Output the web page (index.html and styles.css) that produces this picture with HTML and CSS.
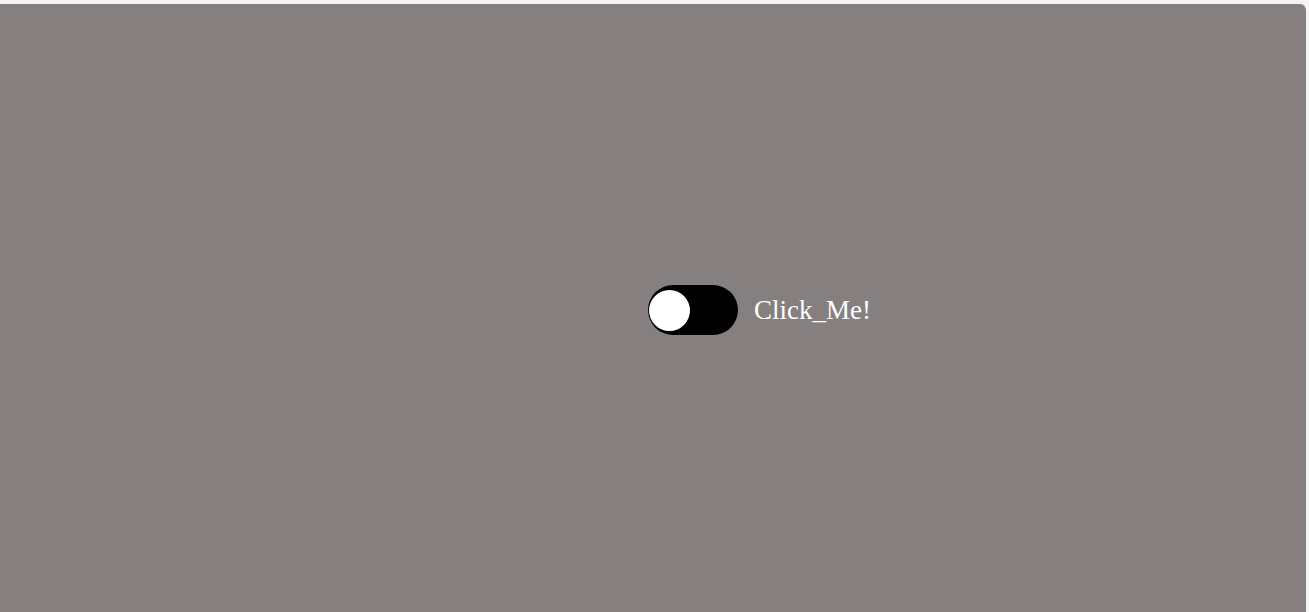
FILE: index.html
```html
<!DOCTYPE html>
<html>
<head>
<meta charset="utf-8">
<link rel="stylesheet" href="styles.css">
</head>
<body>
<div class="panel">
  <label class="switch-row">
    <input type="checkbox" class="switch">
    <span class="label-text">Click_Me!</span>
  </label>
</div>
</body>
</html>
```
FILE: styles.css
```css
html, body {
  margin: 0;
  padding: 0;
  background: #f4f4f4;
  overflow: hidden;
}
.panel {
  margin-top: 4px;
  width: 1306px;
  height: 612px;
  background: #857f7f;
  border-top-right-radius: 6px;
  display: flex;
  align-items: center;
  padding-left: 648px;
  box-sizing: border-box;
}
.switch-row {
  display: flex;
  align-items: center;
  gap: 16px;
  cursor: pointer;
}
.switch {
  appearance: none;
  -webkit-appearance: none;
  margin: 0;
  width: 90px;
  height: 50px;
  border-radius: 25px;
  background: #000;
  position: relative;
  cursor: pointer;
}
.switch::before {
  content: "";
  position: absolute;
  left: 1px;
  top: 4.5px;
  width: 41px;
  height: 41px;
  border-radius: 50%;
  background: #fff;
}
.label-text {
  font-family: "Liberation Serif", "Times New Roman", serif;
  font-size: 27px;
  color: #fff;
}
```
